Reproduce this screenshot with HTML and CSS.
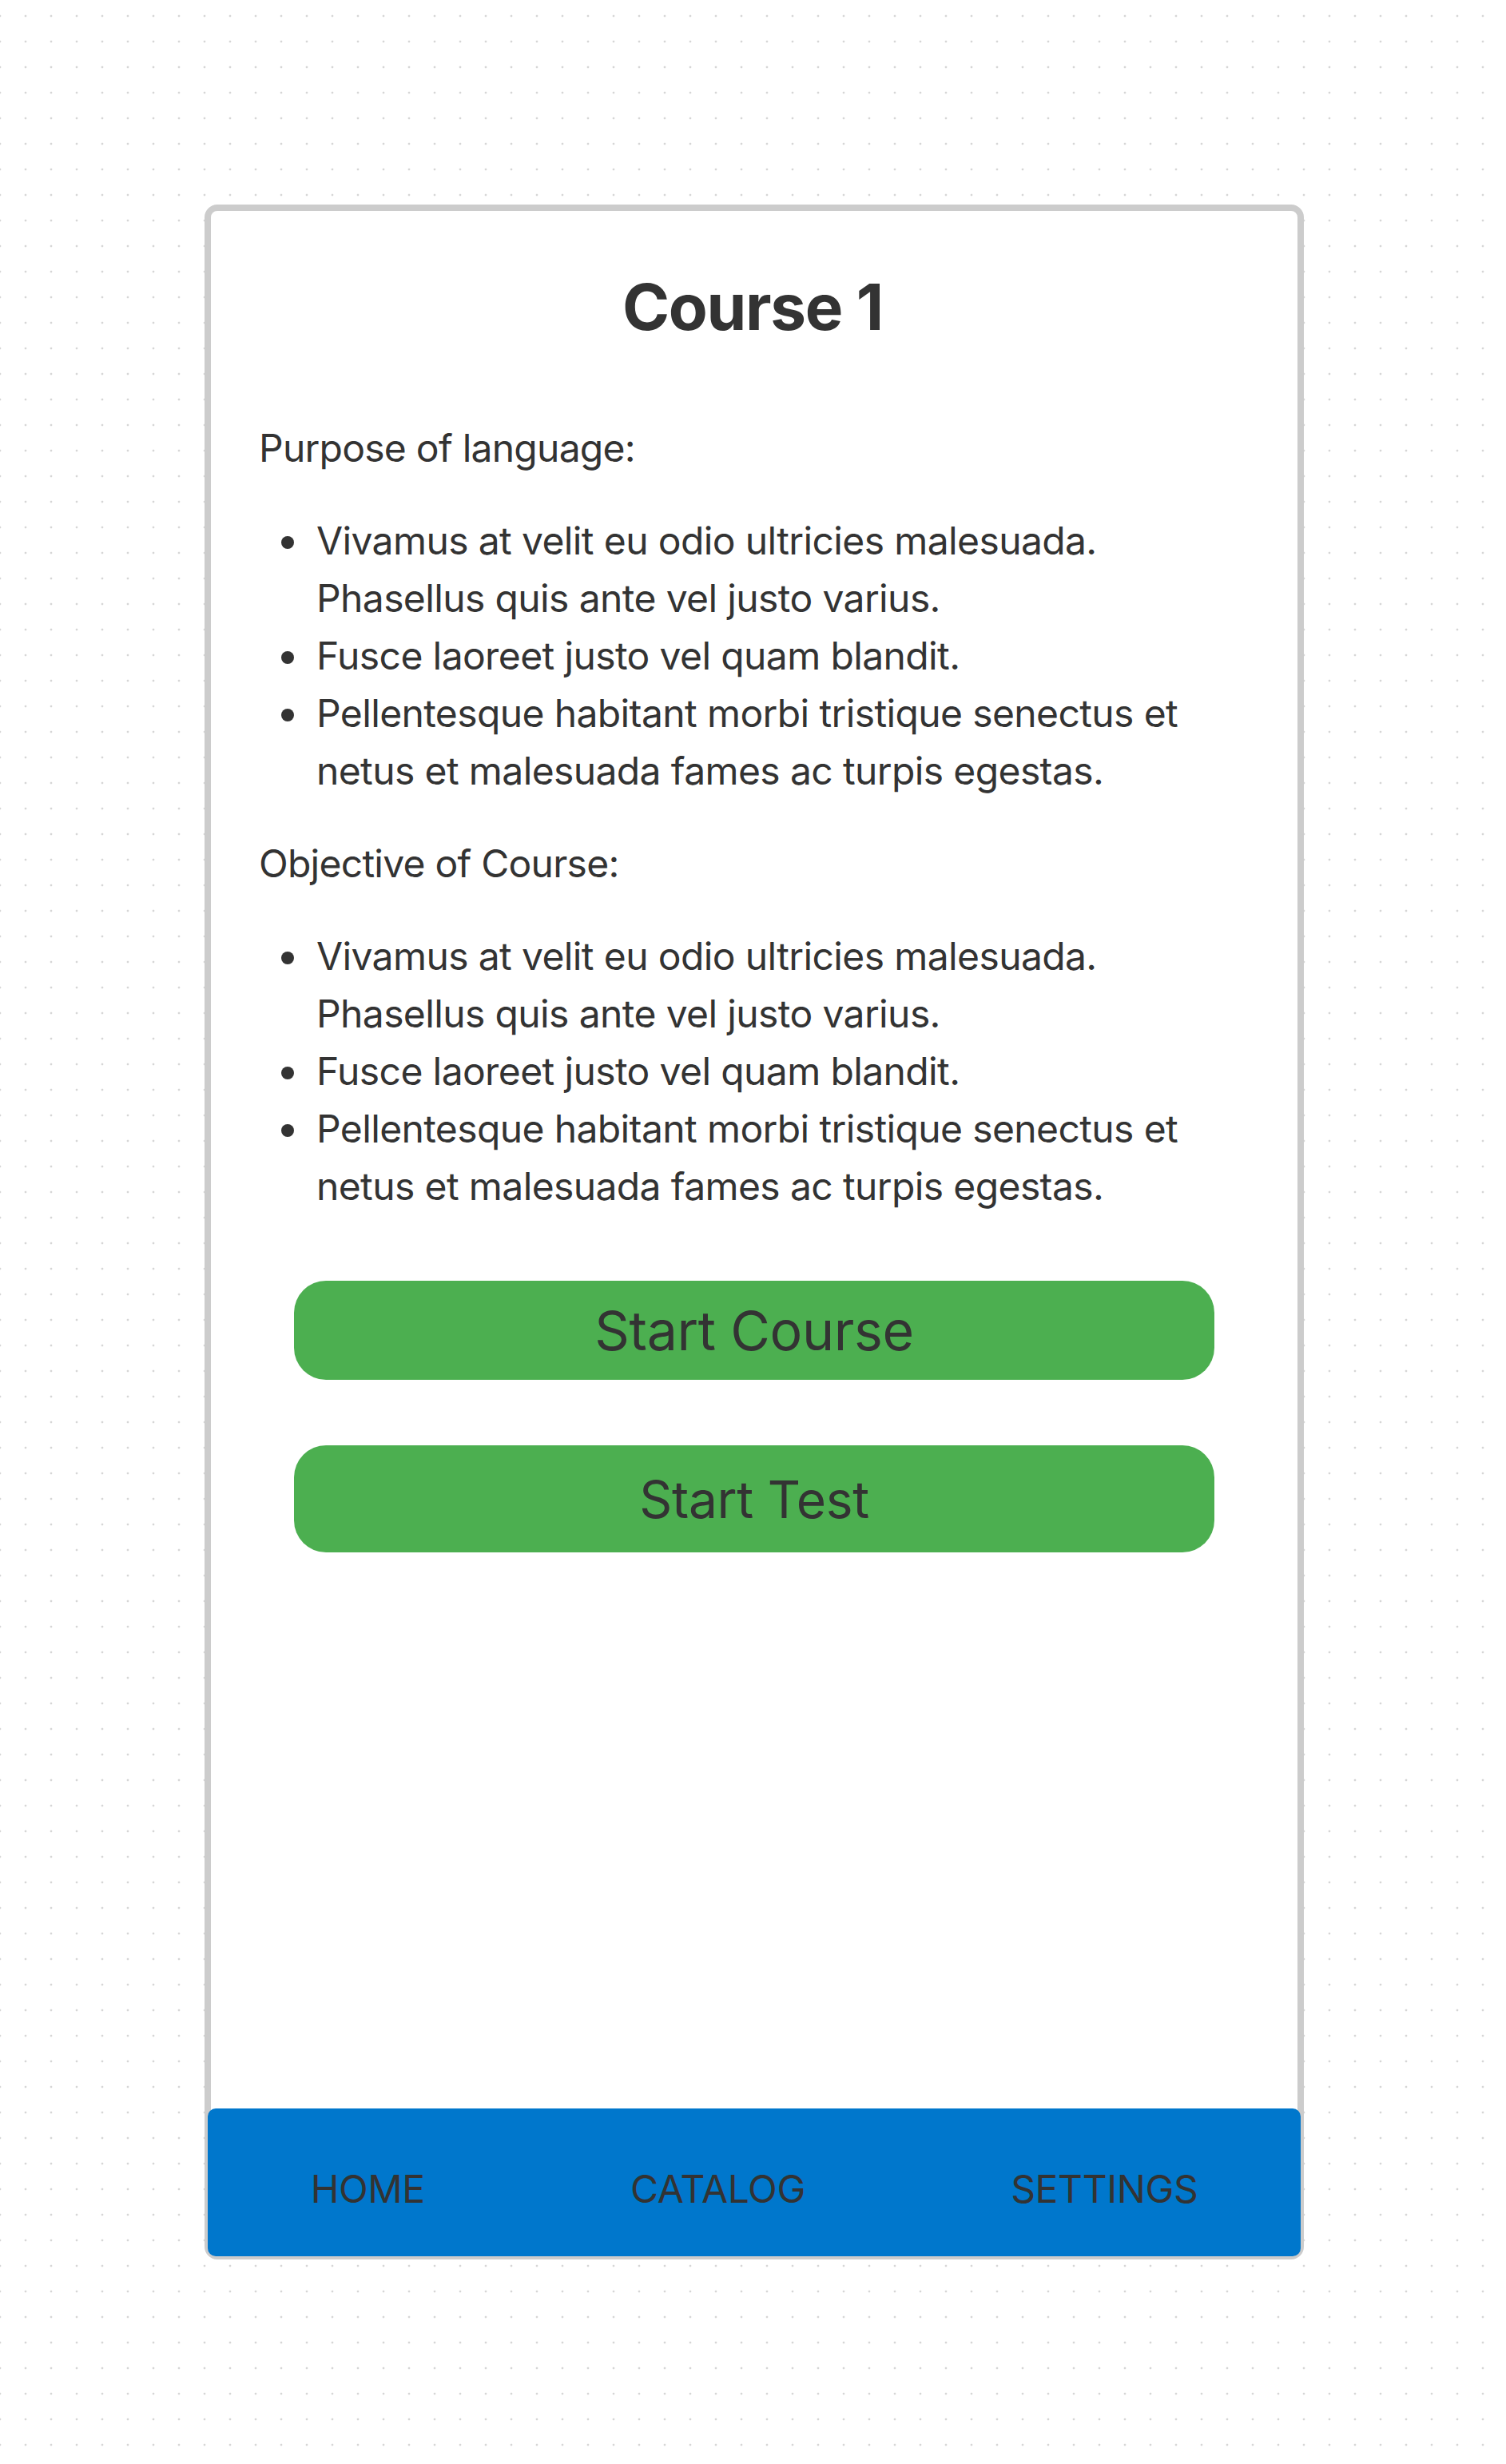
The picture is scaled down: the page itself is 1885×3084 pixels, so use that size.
FILE: index.html
```html
<!DOCTYPE html>
<html lang="en">
<head>
<meta charset="utf-8">
<title>Course 1</title>
<link rel="stylesheet" href="styles.css">
</head>
<body>
<div class="page">
  <div class="card">
    <main class="content">
      <h1 class="title">Course 1</h1>
      <p class="label">Purpose of language:</p>
      <ul class="points">
        <li>Vivamus at velit eu odio ultricies malesuada. Phasellus quis ante vel justo varius.</li>
        <li>Fusce laoreet justo vel quam blandit.</li>
        <li>Pellentesque habitant morbi tristique senectus et netus et malesuada fames ac turpis egestas.</li>
      </ul>
      <p class="label">Objective of Course:</p>
      <ul class="points">
        <li>Vivamus at velit eu odio ultricies malesuada. Phasellus quis ante vel justo varius.</li>
        <li>Fusce laoreet justo vel quam blandit.</li>
        <li>Pellentesque habitant morbi tristique senectus et netus et malesuada fames ac turpis egestas.</li>
      </ul>
      <div class="actions">
        <button class="btn btn-course">Start Course</button>
        <button class="btn btn-test">Start Test</button>
      </div>
    </main>
    <nav class="tabbar">
      <span class="tab">Home</span>
      <span class="tab">Catalog</span>
      <span class="tab">Settings</span>
    </nav>
  </div>
</div>
</body>
</html>
```

FILE: styles.css
```css
html {
  min-height: 100%;
  background-color: #ffffff;
  background-image: radial-gradient(circle, #d6d6d6 1.1px, rgba(255,255,255,0) 1.7px);
  background-size: 32px 32px;
  background-position: -16px 4px;
}

body {
  margin: 0;
  font-family: Inter, "Noto Sans", "Liberation Sans", sans-serif;
  color: #333333;
}

.page {
  padding: 256px 0 256px 256px;
}

.card {
  box-sizing: border-box;
  width: 1376px;
  height: 2572px;
  border: 8px solid #cccccc;
  border-radius: 16px;
  background: #ffffff;
  display: flex;
  flex-direction: column;
}

.content {
  padding: 0 60px;
}

.title {
  margin: 72px 4px 0 0;
  font-size: 80px;
  line-height: 96px;
  font-weight: 700;
  text-align: center;
  letter-spacing: -1.3px;
}

.label {
  margin: 44px 0;
  font-size: 48px;
  line-height: 72px;
  letter-spacing: -0.75px;
}

.title + .label {
  margin-top: 93px;
}

.points {
  margin: 44px 0;
  padding-left: 66px;
  font-size: 48px;
  line-height: 72px;
  letter-spacing: -0.62px;
}

.points li {
  padding-left: 6px;
}

.actions {
  display: flex;
  flex-direction: column;
  align-items: center;
  gap: 82px;
  margin-top: 82px;
}

.btn {
  width: 1152px;
  border: none;
  border-radius: 40px;
  background: #4caf50;
  color: #333333;
  font-family: inherit;
  padding: 0;
}

.btn-course {
  height: 124px;
  font-size: 68px;
  letter-spacing: -0.4px;
}

.btn-test {
  height: 134px;
  font-size: 64px;
  letter-spacing: -0.3px;
}

.tabbar {
  margin: auto -4px -4px;
  height: 185px;
  box-sizing: border-box;
  padding-top: 15px;
  border-radius: 10px;
  background: #0077cc;
  display: flex;
  justify-content: space-around;
  align-items: center;
}

.tab {
  font-size: 48px;
  letter-spacing: -0.4px;
  text-transform: uppercase;
  color: #333333;
}
```
